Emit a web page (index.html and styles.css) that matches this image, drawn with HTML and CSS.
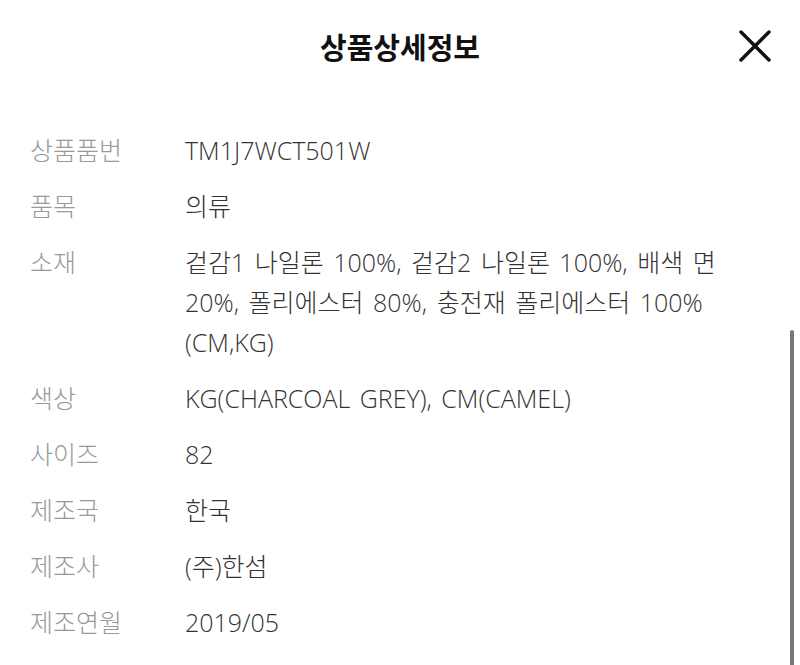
FILE: index.html
```html
<!DOCTYPE html>
<html lang="ko">
<head>
<meta charset="utf-8">
<link rel="stylesheet" href="styles.css">
</head>
<body>
<div class="page">
  <header class="header">
    <h1 class="title">상품상세정보</h1>
    <button class="close" aria-label="닫기">
      <svg width="34" height="34" viewBox="0 0 34 34"><path d="M3 3 L31 31 M31 3 L3 31" stroke="#111" stroke-width="3.4" stroke-linecap="round" fill="none"/></svg>
    </button>
  </header>
  <dl class="info">
    <dt>상품품번</dt><dd>TM1J7WCT501W</dd>
    <dt>품목</dt><dd>의류</dd>
    <dt>소재</dt><dd>겉감1 나일론 100%, 겉감2 나일론 100%, 배색 면 20%, 폴리에스터 80%, 충전재 폴리에스터 100% (CM,KG)</dd>
    <dt>색상</dt><dd>KG(CHARCOAL GREY), CM(CAMEL)</dd>
    <dt>사이즈</dt><dd>82</dd>
    <dt>제조국</dt><dd>한국</dd>
    <dt>제조사</dt><dd>(주)한섬</dd>
    <dt>제조연월</dt><dd>2019/05</dd>
  </dl>
  <div class="scrollbar"></div>
</div>
</body>
</html>
```

FILE: styles.css
```css
html, body {
  margin: 0;
  padding: 0;
  background: #fff;
}
body {
  font-family: "Noto Sans CJK KR", "Noto Sans", sans-serif;
  width: 800px;
  height: 665px;
  overflow: hidden;
}
.page {
  position: relative;
  height: 665px;
}
.header {
  position: relative;
  height: 95px;
  display: flex;
  align-items: center;
  justify-content: center;
}
.title {
  margin: 0 0 2px 0;
  font-size: 29px;
  font-weight: 700;
  color: #111;
  line-height: 1;
}
.close {
  position: absolute;
  right: 28px;
  top: 29px;
  width: 34px;
  height: 34px;
  padding: 0;
  border: 0;
  background: none;
}
.close svg { display: block; }
.info {
  margin: 35px 0 0 0;
  padding: 0 70px 0 30px;
  display: grid;
  grid-template-columns: 155px 1fr;
  row-gap: 16px;
  font-family: "Open Sans", "Noto Sans CJK KR", sans-serif;
  font-size: 25px;
  line-height: 40px;
  font-weight: 300;
}
.info dt {
  color: #999;
}
.info dd {
  margin: 0;
  color: #333;
  word-spacing: 3px;
}
.scrollbar {
  position: absolute;
  right: 6px;
  top: 330px;
  width: 4px;
  height: 340px;
  border-radius: 2px;
  background: #777;
}
```
